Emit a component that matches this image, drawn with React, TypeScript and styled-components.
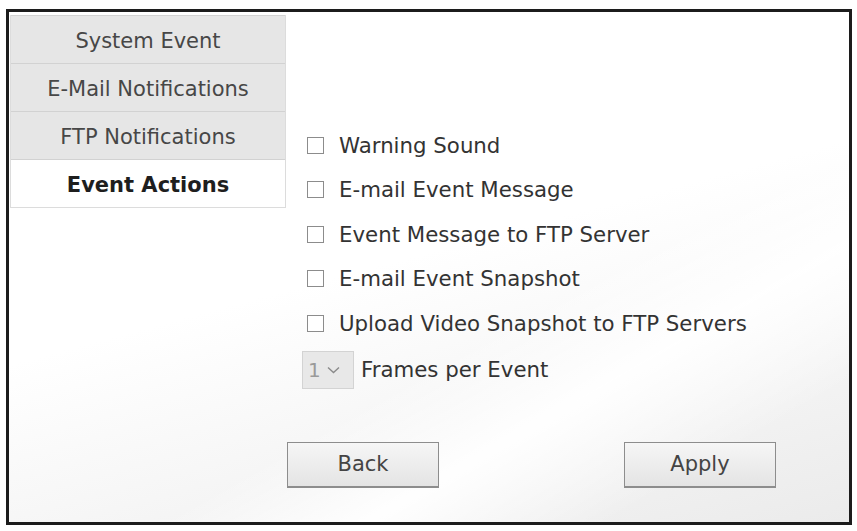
import React from 'react'
import styled, {createGlobalStyle} from 'styled-components'

const GlobalStyle = createGlobalStyle`
  body {
    margin: 0;
    background: #fff;
    font-family: "DejaVu Sans", Verdana, sans-serif;
  }
`

const tabs = ['System Event', 'E-Mail Notifications', 'FTP Notifications', 'Event Actions']
const actions = [
  'Warning Sound',
  'E-mail Event Message',
  'Event Message to FTP Server',
  'E-mail Event Snapshot',
  'Upload Video Snapshot to FTP Servers',
]

export default function App() {
  return (
    <>
      <GlobalStyle />
      <Frame>
        <Sidebar>
          {tabs.map((t) => (
            <Tab key={t} $active={t === 'Event Actions'}>
              {t}
            </Tab>
          ))}
        </Sidebar>
        <Content>
          <Options>
            {actions.map((a) => (
              <Option key={a}>
                <Box />
                {a}
              </Option>
            ))}
            <FramesRow>
              <SelectBox>
                <span>1</span>
                <svg width="13" height="8" viewBox="0 0 13 8">
                  <path d="M1 1.5 L6.5 6.5 L12 1.5" fill="none" stroke="#8a8a8a" strokeWidth="1.4" />
                </svg>
              </SelectBox>
              Frames per Event
            </FramesRow>
          </Options>
          <Buttons>
            <Button>Back</Button>
            <Button>Apply</Button>
          </Buttons>
        </Content>
      </Frame>
    </>
  )
}

const Frame = styled.div`
  box-sizing: border-box;
  width: 846px;
  height: 516px;
  margin: 9px 0 0 6px;
  border: 3px solid #1c1c1c;
  display: flex;
  background:
    linear-gradient(150deg, transparent 60%, rgba(255, 255, 255, 0.95) 72%, transparent 86%),
    linear-gradient(165deg, #fff 48%, #ebebeb 100%);
`

const Sidebar = styled.div`
  width: 274px;
  margin: 3px 0 0 1px;
  display: flex;
  flex-direction: column;
  align-self: flex-start;
  border: 1px solid #dcdcdc;
  border-top: none;
`

const Tab = styled.div<{$active?: boolean}>`
  box-sizing: border-box;
  height: 48px;
  padding-top: 3px;
  display: flex;
  align-items: center;
  justify-content: center;
  font-size: 21px;
  color: ${(p) => (p.$active ? '#1e1e1e' : '#474747')};
  font-weight: ${(p) => (p.$active ? 'bold' : 'normal')};
  background: ${(p) => (p.$active ? '#fff' : '#e6e6e6')};
  border-top: 1px solid #d2d2d2;
`

const Content = styled.div`
  flex: 1;
  display: flex;
  flex-direction: column;
  padding-top: 111px;
`

const Option = styled.div`
  height: 44.5px;
  display: flex;
  align-items: center;
  gap: 15px;
  font-size: 21.3px;
  color: #333;
`

const Options = styled.div`
  display: flex;
  flex-direction: column;
  padding-left: 21px;
`

const Box = styled.span`
  box-sizing: border-box;
  width: 17px;
  height: 17px;
  border: 1px solid #8c8c8c;
  background: #fff;
`

const FramesRow = styled(Option)`
  height: 48px;
  gap: 7px;
  margin-left: -5px;
`

const SelectBox = styled.div`
  box-sizing: border-box;
  width: 52px;
  height: 38px;
  display: flex;
  align-items: center;
  gap: 6px;
  padding-left: 5px;
  background: #e8e8e8;
  border: 1px solid #d3d3d3;
  color: #9a9a9a;
  font-size: 20px;
`

const Buttons = styled.div`
  display: flex;
  gap: 185px;
  margin-top: 48px;
  padding-left: 1px;
`

const Button = styled.button`
  box-sizing: border-box;
  width: 152px;
  height: 46px;
  font-family: "DejaVu Sans", Verdana, sans-serif;
  font-size: 21px;
  color: #444;
  border: 1px solid #8d8d8d;
  border-bottom-width: 2px;
  background: linear-gradient(#f6f6f6, #e4e4e4);
`
